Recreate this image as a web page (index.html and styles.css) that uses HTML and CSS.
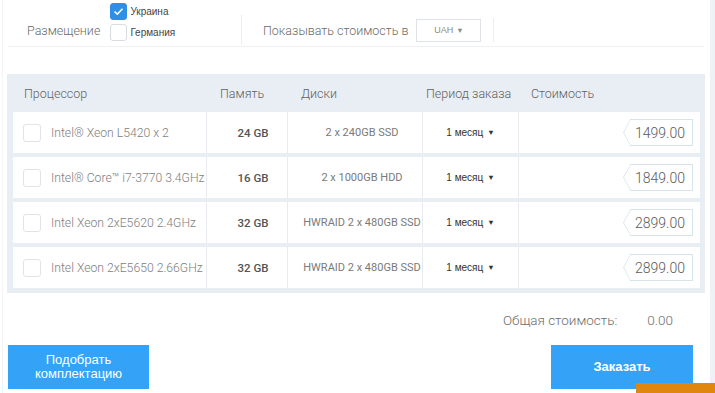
FILE: index.html
```html
<!DOCTYPE html>
<html lang="ru">
<head>
    <meta charset="UTF-8">
    <meta name="viewport" content="width=device-width, initial-scale=1.0">
    <title>Конфигуратор серверов</title>
    <link rel="stylesheet" href="styles.css">
</head>
<body>
    <div class="page">
        <!-- Filters -->
        <div class="filters">
            <div class="placement">
                <span class="filter-label">Размещение</span>
                <div class="options">
                    <label class="option">
                        <span class="box checked">
                            <svg width="11" height="9" viewBox="0 0 11 9"><path d="M1.5 4.5 L4.3 7.2 L9.5 1.8" fill="none" stroke="#fff" stroke-width="1.6"/></svg>
                        </span>
                        Украина
                    </label>
                    <label class="option">
                        <span class="box"></span>
                        Германия
                    </label>
                </div>
            </div>
            <div class="divider tall"></div>
            <span class="filter-label currency-label">Показывать стоимость в</span>
            <div class="select">UAH <span class="caret">&#9660;</span></div>
            <div class="divider"></div>
        </div>

        <!-- Servers table -->
        <div class="servers">
            <div class="servers-head">
                <div class="h-proc">Процессор</div>
                <div class="h-mem">Память</div>
                <div class="h-disk">Диски</div>
                <div class="h-period">Период заказа</div>
                <div class="h-price">Стоимость</div>
            </div>

            <div class="server-row">
                <div class="cell proc"><span class="box"></span>Intel® Xeon L5420 x 2</div>
                <div class="cell mem">24 GB</div>
                <div class="cell disk">2 x 240GB SSD</div>
                <div class="cell period">1 месяц <span class="caret">&#9660;</span></div>
                <div class="cell price"><span class="tag">1499.00</span></div>
            </div>
            <div class="server-row">
                <div class="cell proc"><span class="box"></span>Intel® Core™ i7-3770 3.4GHz</div>
                <div class="cell mem">16 GB</div>
                <div class="cell disk">2 x 1000GB HDD</div>
                <div class="cell period">1 месяц <span class="caret">&#9660;</span></div>
                <div class="cell price"><span class="tag">1849.00</span></div>
            </div>
            <div class="server-row">
                <div class="cell proc"><span class="box"></span>Intel Xeon 2xE5620 2.4GHz</div>
                <div class="cell mem">32 GB</div>
                <div class="cell disk">HWRAID 2 x 480GB SSD</div>
                <div class="cell period">1 месяц <span class="caret">&#9660;</span></div>
                <div class="cell price"><span class="tag">2899.00</span></div>
            </div>
            <div class="server-row">
                <div class="cell proc"><span class="box"></span>Intel Xeon 2xE5650 2.66GHz</div>
                <div class="cell mem">32 GB</div>
                <div class="cell disk">HWRAID 2 x 480GB SSD</div>
                <div class="cell period">1 месяц <span class="caret">&#9660;</span></div>
                <div class="cell price"><span class="tag">2899.00</span></div>
            </div>
        </div>

        <div class="total">
            <span>Общая стоимость:</span>
            <span class="total-sum">0.00</span>
        </div>

        <div class="actions">
            <button class="btn">Подобрать<br>комплектацию</button>
            <button class="btn btn-order">Заказать</button>
        </div>
    </div>
    <div class="side-strip"></div>

    <div class="callback"></div>
</body>
</html>
```

FILE: styles.css
```css
* {
    margin: 0;
    padding: 0;
    box-sizing: border-box;
    font-family: "Roboto", "Liberation Sans", sans-serif;
}

body {
    display: flex;
    width: 715px;
    height: 393px;
    overflow: hidden;
    background: #fff;
    position: relative;
}

.page {
    width: 708px;
    margin-left: 2px;
    border-left: 1px solid #f2f4f6;
    padding-left: 4px;
}

.side-strip {
    flex: 1;
    background: #eef2f6;
}

/* Filters */
.filters {
    display: flex;
    align-items: center;
    height: 47px;
    padding-top: 14px;
    margin-left: 1px;
    width: 696px;
    border-bottom: 1px solid #eef0f3;
}

.placement {
    display: flex;
    align-items: center;
    width: 233px;
    padding-left: 19px;
}

.filter-label {
    font-size: 12.5px;
    font-weight: 300;
    color: #6b6b6b;
}

.options {
    align-self: flex-start;
    margin-top: -16px;
    margin-left: 10px;
    display: flex;
    flex-direction: column;
    gap: 4px;
}

.option {
    display: flex;
    align-items: center;
    gap: 3px;
    font-family: "Liberation Sans", sans-serif;
    font-size: 10px;
    color: #444;
}

.box {
    display: inline-flex;
    align-items: center;
    justify-content: center;
    width: 17px;
    height: 17px;
    border: 1px solid #d9dde2;
    border-radius: 3px;
    background: #fff;
    flex-shrink: 0;
}

.box.checked {
    background: #2f8fe6;
    border-color: #2f8fe6;
}

.divider {
    width: 1px;
    height: 24px;
    background: #eceff2;
}

.divider.tall {
    height: 30px;
    align-self: flex-start;
    margin-top: 1px;
}

.currency-label {
    margin-left: 21px;
}

.select {
    width: 65px;
    height: 23px;
    margin: 0 12px 0 8px;
    border: 1px solid #dfe2e6;
    display: flex;
    align-items: center;
    justify-content: center;
    font-family: "Liberation Sans", sans-serif;
    font-size: 9px;
    color: #8a8a8a;
    gap: 3px;
}

.caret {
    font-size: 7.5px;
}

/* Servers table */
.servers {
    margin-top: 27px;
    width: 698px;
    background: #e9eef4;
    padding: 0 5px 5px 6px;
    display: flex;
    flex-direction: column;
    gap: 4px;
}

.servers-head,
.server-row {
    display: grid;
    grid-template-columns: 194px 81px 135px 96px 181px;
}

.servers-head {
    height: 38px;
    align-items: center;
    font-size: 12.5px;
    font-weight: 300;
    color: #626262;
    margin-bottom: -4px;
}

.h-proc { padding-left: 11px; }
.h-mem { padding-left: 13px; }
.h-disk { padding-left: 13px; }
.h-period { padding-left: 3px; }
.h-price { padding-left: 12px; }

.server-row {
    height: 41px;
    background: #fff;
}

.cell {
    display: flex;
    align-items: center;
    justify-content: center;
    border-right: 1px solid #e7ebf0;
}

.cell:last-child {
    border-right: none;
}

.proc {
    justify-content: flex-start;
    padding-left: 10px;
    gap: 10px;
    font-size: 12.2px;
    font-weight: 300;
    color: #7e7e7e;
    white-space: nowrap;
}

.proc .box {
    width: 18px;
    height: 18px;
    border-color: #e0e3e7;
}

.mem {
    padding-left: 12px;
    font-size: 11.5px;
    font-weight: 500;
    color: #555;
}

.disk {
    padding-left: 14px;
    font-size: 11px;
    color: #7a7a7a;
}

.period {
    font-family: "Liberation Sans", sans-serif;
    font-size: 10px;
    color: #333;
    gap: 4px;
}

.price {
    justify-content: flex-end;
    padding-right: 7px;
}

.tag {
    position: relative;
    display: inline-flex;
    align-items: center;
    justify-content: flex-end;
    width: 63px;
    height: 27px;
    padding-right: 7px;
    border: 1px solid #d8e4eb;
    border-left: none;
    background: #fff;
    font-size: 14px;
    font-weight: 300;
    color: #5a5a5a;
}

.tag::before {
    content: "";
    position: absolute;
    left: -9px;
    top: 3px;
    width: 18px;
    height: 18px;
    border-left: 1px solid #d8e4eb;
    border-bottom: 1px solid #d8e4eb;
    transform: scaleX(0.55) rotate(45deg);
}

/* Total */
.total {
    display: flex;
    justify-content: flex-end;
    gap: 30px;
    width: 666px;
    margin-top: 19px;
    line-height: 16px;
    font-size: 13.5px;
    font-weight: 300;
    color: #6e6e6e;
}

/* Buttons */
.actions {
    display: flex;
    justify-content: space-between;
    width: 685px;
    margin-top: 17px;
    margin-left: 1px;
}

.btn {
    width: 141px;
    height: 44px;
    border: none;
    background: #34a2f6;
    color: #fff;
    font-family: "Liberation Sans", sans-serif;
    font-size: 13px;
    line-height: 14px;
    cursor: pointer;
}

.btn-order {
    width: 142px;
    font-weight: bold;
}

.callback {
    position: absolute;
    left: 636px;
    top: 383px;
    width: 79px;
    height: 20px;
    background: #e0860e;
}
```
